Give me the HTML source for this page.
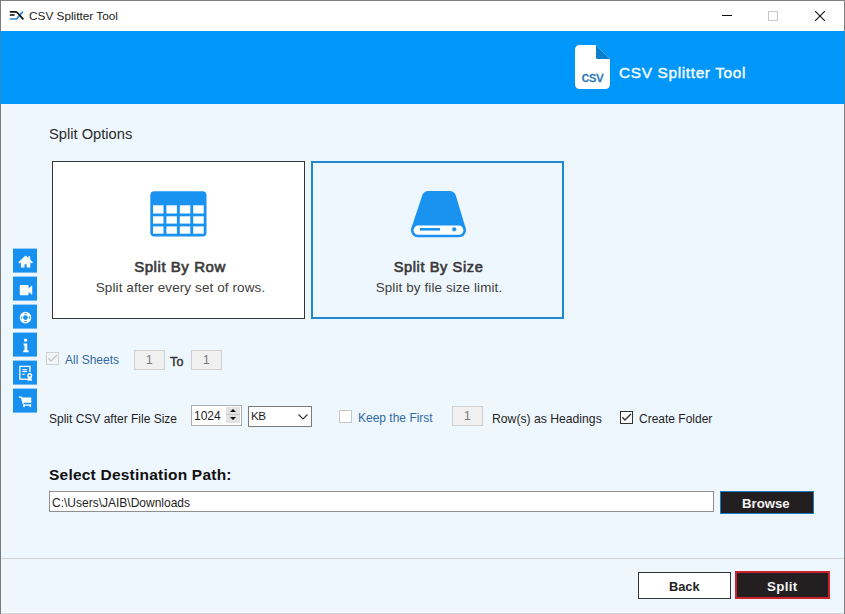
<!DOCTYPE html>
<html>
<head>
<meta charset="utf-8">
<style>
*{margin:0;padding:0;box-sizing:border-box;}
html,body{width:845px;height:614px;overflow:hidden;background:#eff7fe;font-family:"Liberation Sans",sans-serif;}
.a{position:absolute;}
.t{position:absolute;white-space:pre;}
#win{position:absolute;left:0;top:0;width:845px;height:614px;background:#eff7fe;}
#titlebar{position:absolute;left:0;top:0;width:845px;height:31px;background:#fff;}
#header{position:absolute;left:0;top:31px;width:845px;height:73px;background:#0096fa;}
.bl{position:absolute;background:#5c5c5c;}
.card{position:absolute;}
.sb{position:absolute;left:13px;width:24px;height:24px;background:#1890f0;}
.inp{position:absolute;border:1px solid #cfcfcf;background:#f0f0f0;}
.lbl{position:absolute;white-space:pre;font-size:12px;line-height:12px;color:#1e1e1e;}
.blu{color:#316aa2;}
.chk{position:absolute;width:13px;height:13px;border:1px solid #cccccc;background:#fff;}
.btn{position:absolute;text-align:center;font-weight:bold;}
</style>
</head>
<body>
<div id="win">
  <div id="titlebar">
    <svg class="a" style="left:0;top:0" width="30" height="30" viewBox="0 0 30 30">
      <path d="M9.8 15 H14.6" stroke="#141414" stroke-width="1.6" fill="none"/>
      <path d="M9.8 19 H15.6 Q16.6 19 17.4 18.1 L22.8 11.6" stroke="#2f8bd5" stroke-width="1.7" fill="none"/>
      <path d="M9.8 11.9 H15.6 Q16.6 11.9 17.4 12.8 L23.4 19.3" stroke="#141414" stroke-width="1.7" fill="none"/>
    </svg>
    <div id="ttl" class="t" style="left:29px;top:10px;font-size:11.8px;line-height:12px;color:#1a1a1a;">CSV Splitter Tool</div>
    <div class="a" style="left:722px;top:15px;width:10px;height:1px;background:#111;"></div>
    <div class="a" style="left:768px;top:11px;width:10px;height:10px;border:1px solid #c8c8c8;"></div>
    <svg class="a" style="left:815px;top:11px" width="10" height="10" viewBox="0 0 10 10">
      <path d="M0 0 L10 10 M10 0 L0 10" stroke="#111" stroke-width="1.1"/>
    </svg>
  </div>
  <div id="header">
    <svg class="a" style="left:575px;top:14px" width="35" height="44" viewBox="0 0 35 44">
      <path d="M5 0 H21 L35 14 V39 Q35 44 30 44 H5 Q0 44 0 39 V5 Q0 0 5 0 Z" fill="#fff"/>
      <path d="M21 0 L35 14 H22.5 Q21 14 21 12.5 Z" fill="#0b7fcc"/>
      <text x="17.6" y="36.6" text-anchor="middle" font-family="Liberation Sans" font-size="14.6" stroke="#1f74b8" stroke-width="0.35" fill="#1f74b8">csv</text>
    </svg>
    <div id="htxt" class="t" style="left:619px;top:34px;font-size:15.4px;line-height:16px;font-weight:normal;-webkit-text-stroke:0.45px #f4fbff;letter-spacing:0.65px;color:#f4fbff;">CSV Splitter Tool</div>
  </div>

  <div id="splitopt" class="t" style="left:49px;top:127px;font-size:14.7px;line-height:15px;color:#2a2a2a;">Split Options</div>

  <!-- card 1 -->
  <div class="card" style="left:52px;top:161px;width:253px;height:158px;background:#fff;border:1px solid #333;">
    <svg class="a" style="left:97px;top:29px" width="57" height="46" viewBox="0 0 57 46">
      <rect x="0.3" y="0.3" width="56.2" height="45.2" rx="4" fill="#1a92f0"/>
      <g fill="#fff"><rect x="3.0" y="14.3" width="10.5" height="8.2"/><rect x="16.4" y="14.3" width="10.5" height="8.2"/><rect x="29.8" y="14.3" width="10.5" height="8.2"/><rect x="43.2" y="14.3" width="10.5" height="8.2"/><rect x="3.0" y="25.3" width="10.5" height="7.3"/><rect x="16.4" y="25.3" width="10.5" height="7.3"/><rect x="29.8" y="25.3" width="10.5" height="7.3"/><rect x="43.2" y="25.3" width="10.5" height="7.3"/><rect x="3.0" y="35.4" width="10.5" height="7.3"/><rect x="16.4" y="35.4" width="10.5" height="7.3"/><rect x="29.8" y="35.4" width="10.5" height="7.3"/><rect x="43.2" y="35.4" width="10.5" height="7.3"/></g>
    </svg>
    <div id="c1t" class="t" style="left:1.5px;width:251px;text-align:center;top:97px;font-size:15px;line-height:15px;font-weight:normal;-webkit-text-stroke:0.65px #3a3a3a;letter-spacing:0.55px;color:#3a3a3a;">Split By Row</div>
    <div id="c1d" class="t" style="left:2px;width:251px;text-align:center;top:119px;font-size:13.5px;line-height:14px;letter-spacing:0.1px;color:#404040;">Split after every set of rows.</div>
  </div>

  <!-- card 2 -->
  <div class="card" style="left:311px;top:161px;width:253px;height:158px;border:2px solid #1f88d2;">
    <svg class="a" style="left:97px;top:28px" width="57" height="48" viewBox="0 0 57 48">
      <path d="M12.2 4.5 Q13.6 0 18.5 0 H39.5 Q44.4 0 45.8 4.5 L55.6 37 H1.4 Z" fill="#1a92f0"/>
      <rect x="1" y="32.2" width="55" height="14" rx="7" fill="#1a92f0"/>
      <rect x="3.6" y="34.6" width="49.8" height="9.2" rx="4.6" fill="#fff"/>
      <rect x="10" y="37" width="20" height="2.6" fill="#1a92f0"/>
      <circle cx="44.2" cy="38.3" r="2.1" fill="#1a92f0"/>
    </svg>
    <div id="c2t" class="t" style="left:1px;width:249px;text-align:center;top:97px;font-size:14.6px;line-height:15px;font-weight:normal;-webkit-text-stroke:0.65px #3a3a3a;letter-spacing:0.6px;color:#3a3a3a;">Split By Size</div>
    <div id="c2d" class="t" style="left:1.5px;width:249px;text-align:center;top:118px;font-size:13.4px;line-height:14px;letter-spacing:0.12px;color:#404040;">Split by file size limit.</div>
  </div>

  <!-- sidebar -->
  <svg class="a" style="left:0;top:0" width="45" height="420" viewBox="0 0 45 420">
    <g fill="#1890f0">
      <rect x="13" y="248.6" width="24" height="24"/>
      <rect x="13" y="276.6" width="24" height="24"/>
      <rect x="13" y="304.6" width="24" height="24"/>
      <rect x="13" y="332.6" width="24" height="24"/>
      <rect x="13" y="360.6" width="24" height="24"/>
      <rect x="13" y="388.6" width="24" height="24"/>
    </g>
    <g fill="#fff" stroke="none">
      <!-- home -->
      <path d="M19.5 262.4 L25.6 256.7 L31.8 262.4" stroke="#fff" stroke-width="1.8" stroke-linecap="round" stroke-linejoin="round" fill="none"/>
      <rect x="28.4" y="256.2" width="1.8" height="3.6"/>
      <path d="M20.9 261.6 L25.6 257.4 L30.3 261.6 V267.4 H26.7 V264.2 H24.5 V267.4 H20.9 Z"/>
      <!-- camera -->
      <rect x="19.8" y="285" width="8.8" height="10.2" rx="1"/>
      <path d="M28 289 L32.2 285.2 V295 L28 291.2 Z"/>
      <!-- life ring -->
      <circle cx="25.5" cy="317.6" r="4.1" stroke="#fff" stroke-width="3.4" fill="none"/>
      <g fill="#1890f0">
        <rect x="24.2" y="313.3" width="2.6" height="0.9"/>
        <rect x="24.2" y="321.1" width="2.6" height="0.9"/>
        <rect x="21.3" y="316.3" width="0.9" height="2.6"/>
        <rect x="28.9" y="316.3" width="0.9" height="2.6"/>
      </g>
      <!-- info -->
      <circle cx="25.6" cy="340.2" r="1.6"/>
      <path d="M23.6 343.6 H27.2 V350.3 H28.6 V352.3 H23.3 V350.3 H24.5 V345.5 H23.6 Z"/>
      <!-- certificate -->
      <rect x="19.9" y="366.4" width="10" height="12.8" stroke="#fff" stroke-width="1.3" fill="none"/>
      <rect x="22.3" y="369.2" width="4.8" height="1.1"/>
      <rect x="22.3" y="371.1" width="4.8" height="1.1"/>
      <rect x="22.3" y="373.8" width="2.4" height="1.1"/>
      <circle cx="29.7" cy="375.5" r="3.6" fill="#1890f0"/>
      <path d="M28 377 L27.6 381.3 L29.7 380.2 L31.8 381.3 L31.4 377 Z"/>
      <circle cx="29.7" cy="375.5" r="2.5"/>
      <circle cx="29.7" cy="375.5" r="1.1" fill="#1890f0"/>
      <!-- cart -->
      <path d="M19.4 396.9 L21.6 397.6 L23.2 403.4" stroke="#fff" stroke-width="1.4" stroke-linecap="round" fill="none"/>
      <path d="M21.9 397.6 H31.3 V402.8 H23.3 Z"/>
      <rect x="23.2" y="404.4" width="7.9" height="1.3"/>
      <rect x="23.2" y="404.4" width="1.6" height="2.7"/>
      <rect x="29.5" y="404.4" width="1.6" height="2.7"/>
    </g>
  </svg>

  <!-- all sheets row -->
  <div class="chk" style="left:46px;top:352px;border-color:#d0d0d0;background:#f2f6fa;"></div>
  <svg class="a" style="left:46px;top:352px" width="13" height="13" viewBox="0 0 13 13"><path d="M2.3 6.3 L5 9 L11 3" stroke="#c4c4c4" stroke-width="1.3" fill="none"/></svg>
  <div id="allsh" class="lbl blu" style="left:65px;top:354px;">All Sheets</div>
  <div class="inp" style="left:134px;top:350px;width:31px;height:20px;"></div>
  <div class="lbl" style="left:146px;top:354px;color:#777;">1</div>
  <div id="to" class="lbl" style="left:170px;top:356px;font-size:12.5px;-webkit-text-stroke:0.45px #333;letter-spacing:0.3px;color:#333;">To</div>
  <div class="inp" style="left:191px;top:350px;width:31px;height:20px;"></div>
  <div class="lbl" style="left:203px;top:354px;color:#777;">1</div>

  <!-- split size row -->
  <div id="scsv" class="lbl" style="left:49px;top:413px;">Split CSV after File Size</div>
  <div class="a" style="left:191px;top:405px;width:51px;height:21px;border:1px solid #adadad;background:#fff;"></div>
  <div id="n1024" class="lbl" style="left:194px;top:410px;">1024</div>
  <div class="a" style="left:226px;top:407px;width:14px;height:16px;background:#e3e3e3;"></div>
  <div class="a" style="left:226px;top:414px;width:14px;height:1px;background:#c4c4c4;"></div>
  <svg class="a" style="left:226px;top:407px" width="14" height="16" viewBox="0 0 14 16"><path d="M4 5 L7 2 L10 5 Z M4 10 L10 10 L7 13 Z" fill="#111"/></svg>
  <div class="a" style="left:248px;top:406px;width:64px;height:21px;border:1px solid #7a7a7a;background:#fff;"></div>
  <div id="kb" class="lbl" style="left:251px;top:410px;font-size:11.6px;letter-spacing:-0.4px;">KB</div>
  <svg class="a" style="left:298px;top:414px" width="10" height="6" viewBox="0 0 10 6"><path d="M0.5 0.5 L5 5 L9.5 0.5" stroke="#333" stroke-width="1.1" fill="none"/></svg>

  <div class="chk" style="left:339px;top:410px;border-color:#c6c6c6;"></div>
  <div id="keep" class="lbl blu" style="left:358px;top:412px;">Keep the First</div>
  <div class="inp" style="left:452px;top:406px;width:31px;height:20px;"></div>
  <div class="lbl" style="left:464px;top:410px;color:#777;">1</div>
  <div id="rows" class="lbl" style="left:492px;top:413px;font-size:12.2px;">Row(s) as Headings</div>
  <div class="chk" style="left:620px;top:411px;border-color:#333;"></div>
  <svg class="a" style="left:620px;top:411px" width="13" height="13" viewBox="0 0 13 13"><path d="M2.3 6.3 L5 9 L11 3" stroke="#333" stroke-width="1.4" fill="none"/></svg>
  <div id="cf" class="lbl" style="left:639px;top:413px;">Create Folder</div>

  <!-- destination -->
  <div id="sdp" class="t" style="left:49px;top:467px;font-size:15.5px;line-height:15px;font-weight:bold;letter-spacing:0.22px;color:#111;">Select Destination Path:</div>
  <div class="a" style="left:49px;top:491px;width:665px;height:21px;border:1px solid #8f8f8f;background:#fff;"></div>
  <div id="path" class="lbl" style="left:52px;top:497px;">C:\Users\JAIB\Downloads</div>
  <div class="btn" style="left:720px;top:491px;width:94px;height:23px;background:#231f20;border:1px solid #1b7cc4;"></div>
  <div id="browse" class="t" style="left:742px;top:497px;font-size:13.2px;line-height:13px;font-weight:bold;color:#f2f2f2;">Browse</div>

  <!-- bottom -->
  <div class="a" style="left:1px;top:558px;width:843px;height:1px;background:#d2d2d2;"></div>
  <div class="a" style="left:638px;top:572px;width:93px;height:27px;border:1px solid #333;background:#fff;"></div>
  <div id="back" class="t" style="left:669px;top:580px;font-size:12.8px;line-height:13px;font-weight:bold;color:#222;">Back</div>
  <div class="a" style="left:735px;top:571px;width:95px;height:28px;border:2px solid #cc2230;background:#231f20;"></div>
  <div id="split" class="t" style="left:767px;top:580px;font-size:13.4px;line-height:13px;font-weight:bold;letter-spacing:0.3px;color:#f2f2f2;">Split</div>

  <!-- window borders -->
  <div class="bl" style="left:0;top:0;width:845px;height:1px;background:#808080;"></div>
  <div class="bl" style="left:0;top:0;width:1px;height:614px;background:#7b7b7b;"></div>
  <div class="bl" style="left:0;top:31px;width:1px;height:73px;background:#2e8bc9;"></div>
  <div class="bl" style="left:844px;top:0;width:1px;height:614px;background:#808080;"></div>
  <div class="bl" style="left:844px;top:31px;width:1px;height:73px;background:#2e8bc9;"></div>
  <div class="bl" style="left:1px;top:613px;width:843px;height:1px;background:#d3d7dc;"></div>
</div>
</body>
</html>
